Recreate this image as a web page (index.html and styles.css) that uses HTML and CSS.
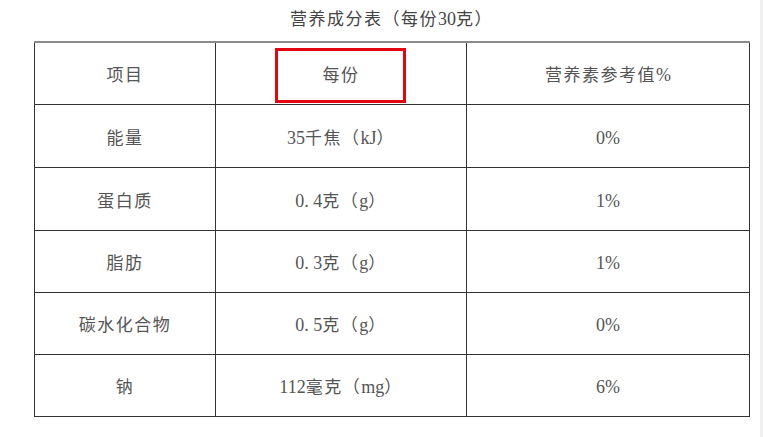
FILE: index.html
```html
<!DOCTYPE html>
<html lang="zh-CN">
<head>
<meta charset="utf-8">
<title>营养成分表</title>
<link rel="stylesheet" href="styles.css">
</head>
<body>
<div class="page">
  <div class="title">营养成分表（每份<span class="num">30</span>克）</div>
  <table class="nutri">
    <colgroup>
      <col class="c1"><col class="c2"><col class="c3">
    </colgroup>
    <thead>
      <tr>
        <th>项目</th>
        <th class="marked">每份<span class="highlight"></span></th>
        <th>营养素参考值<span class="num">%</span></th>
      </tr>
    </thead>
    <tbody>
      <tr><td>能量</td><td><span class="num">35</span>千焦（<span class="num">kJ</span>）</td><td><span class="num">0%</span></td></tr>
      <tr><td>蛋白质</td><td><span class="num">0. 4</span>克（<span class="num">g</span>）</td><td><span class="num">1%</span></td></tr>
      <tr class="short"><td>脂肪</td><td><span class="num">0. 3</span>克（<span class="num">g</span>）</td><td><span class="num">1%</span></td></tr>
      <tr class="short"><td>碳水化合物</td><td><span class="num">0. 5</span>克（<span class="num">g</span>）</td><td><span class="num">0%</span></td></tr>
      <tr class="short"><td>钠</td><td><span class="num">112</span>毫克（<span class="num">mg</span>）</td><td><span class="num">6%</span></td></tr>
    </tbody>
  </table>
</div>
</body>
</html>
```
FILE: styles.css
```css
html, body {
  margin: 0;
  padding: 0;
  background: #ffffff;
}
body {
  font-family: "Noto Sans CJK SC", "Liberation Serif", serif;
  color: #555;
}
.page {
  width: 763px;
  height: 437px;
  padding-left: 34px;
  box-sizing: border-box;
  border-right: 3px solid #f0f0f0;
}
.title {
  width: 715px;
  height: 41px;
  line-height: 36px;
  text-align: center;
  font-size: 17px;
  letter-spacing: 1.5px;
  color: #444;
}
.num {
  font-family: "Liberation Serif", serif;
  font-size: 18px;
  letter-spacing: 0;
}
.nutri {
  border-collapse: collapse;
  table-layout: fixed;
  width: 715px;
}
.c1 { width: 181px; }
.c2 { width: 251px; }
.c3 { width: 283px; }
.nutri th,
.nutri td {
  border: 1px solid #333;
  height: 62px;
  padding: 0;
  text-align: center;
  vertical-align: middle;
  font-size: 17px;
  font-weight: normal;
  letter-spacing: 1.5px;
  color: #555;
}
.nutri thead th {
  border-top: 2px solid #8a8a8a;
  height: 61px;
}
.nutri tbody tr.short td {
  height: 61px;
}
.marked {
  position: relative;
}
.highlight {
  position: absolute;
  left: 59px;
  top: 5px;
  width: 131px;
  height: 55px;
  box-sizing: border-box;
  border: 3px solid #e20613;
}
```
